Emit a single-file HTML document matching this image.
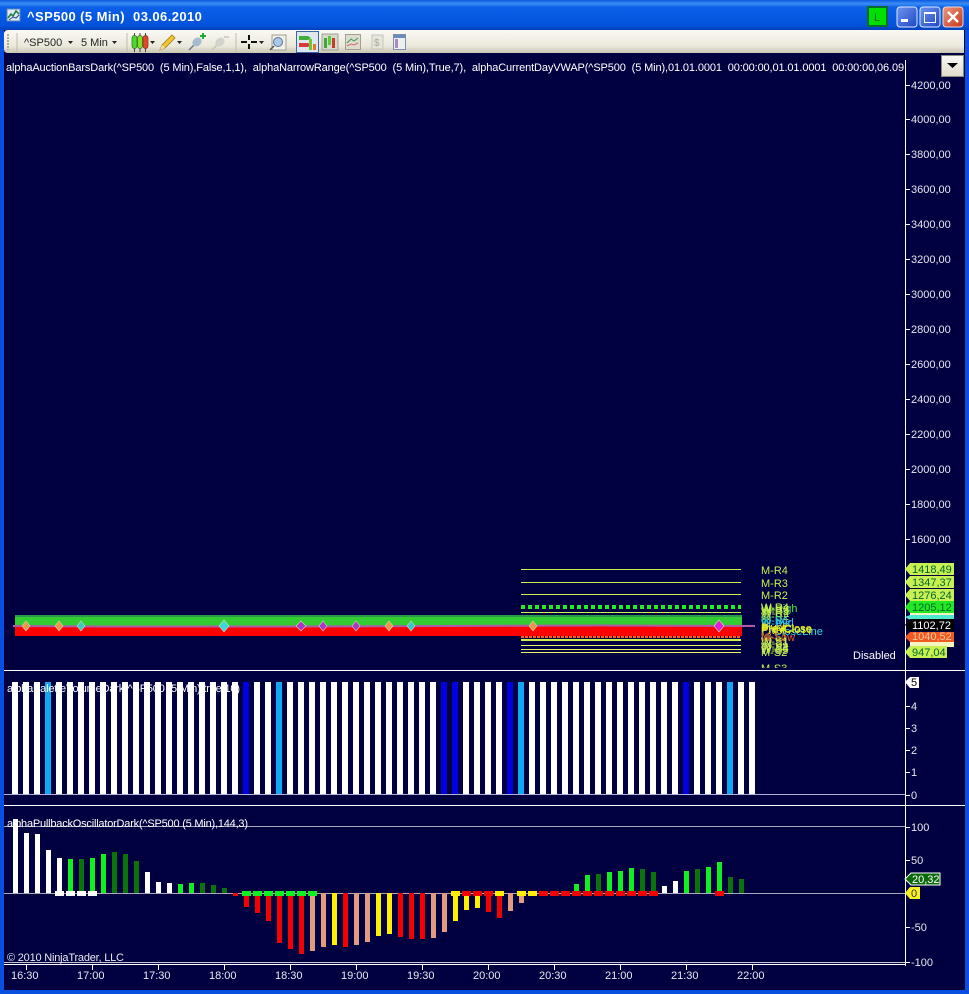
<!DOCTYPE html>
<html><head><meta charset="utf-8"><title>^SP500</title>
<style>
html,body{margin:0;padding:0;background:#000040;width:969px;height:994px;overflow:hidden}
svg{display:block;position:absolute;left:0;top:0}
text{font-family:"Liberation Sans",sans-serif;font-size:11px;white-space:pre}
.w{fill:#fff}.a{fill:#e8e8f0}.l{fill:#c8f050}
</style></head><body>
<svg width="969" height="994" viewBox="0 0 969 994" xmlns="http://www.w3.org/2000/svg">
<defs>
<linearGradient id="tb" x1="0" y1="0" x2="0" y2="1"><stop offset="0" stop-color="#0a5ae0"/><stop offset=".12" stop-color="#3a8cf5"/><stop offset=".25" stop-color="#0a5fe8"/><stop offset=".85" stop-color="#0452dc"/><stop offset="1" stop-color="#0340b8"/></linearGradient>
<linearGradient id="tool" x1="0" y1="0" x2="0" y2="1"><stop offset="0" stop-color="#faf9f3"/><stop offset=".7" stop-color="#ebe9dc"/><stop offset="1" stop-color="#c8c5b2"/></linearGradient>
<linearGradient id="btn" x1="0" y1="0" x2="1" y2="1"><stop offset="0" stop-color="#6f95ee"/><stop offset="1" stop-color="#1c46c4"/></linearGradient>
<linearGradient id="cls" x1="0" y1="0" x2="1" y2="1"><stop offset="0" stop-color="#eb9a80"/><stop offset="1" stop-color="#c4361a"/></linearGradient>
<linearGradient id="drop" x1="0" y1="0" x2="0" y2="1"><stop offset="0" stop-color="#fbfaf5"/><stop offset="1" stop-color="#dedbca"/></linearGradient>
<pattern id="vb" x="12" y="0" width="11" height="10" patternUnits="userSpaceOnUse"><rect width="6" height="10" fill="#fff"/></pattern>
<clipPath id="c2"><rect x="4" y="53" width="901" height="612"/></clipPath>
<clipPath id="c3"><rect x="4" y="53" width="901" height="615"/></clipPath>
</defs>

<!-- frame -->
<rect width="969" height="994" fill="#0452dc"/>
<rect width="969" height="30" fill="url(#tb)"/>
<rect x="4" y="30" width="961" height="960" fill="#000040"/>
<rect x="0" y="30" width="4" height="964" fill="#0a50e0"/>
<rect x="965" y="30" width="4" height="964" fill="#0a50e0"/>
<rect x="0" y="990" width="969" height="4" fill="#0a50e0"/>

<!-- title icon -->
<rect x="7" y="9" width="13" height="12" fill="#dce8f4" stroke="#5c86b4"/>
<path d="M8 18l3-4 2 2 3-5 3 3" stroke="#1e7a3a" stroke-width="1.5" fill="none"/>
<path d="M9 20l4-3 3 1 3-3" stroke="#2a4a8a" fill="none"/>
<text x="27" y="21" style="font-size:13px;font-weight:bold;letter-spacing:.42px" fill="#fff">^SP500 (5 Min)  03.06.2010</text>

<!-- title buttons -->
<rect x="868" y="7" width="19" height="19" fill="#00e000" stroke="#0a6a30" stroke-width="2"/>
<text x="874" y="21" fill="#063" style="font-size:11px">L</text>
<rect x="897" y="7" width="20" height="20" rx="3" fill="url(#btn)" stroke="#dfe8fb"/>
<rect x="901" y="19" width="7" height="3" fill="#fff"/>
<rect x="920" y="7" width="20" height="20" rx="3" fill="url(#btn)" stroke="#dfe8fb"/>
<rect x="924.500" y="12.500" width="11" height="10" fill="none" stroke="#fff"/><rect x="924" y="12" width="12" height="2" fill="#fff"/>
<rect x="943" y="7" width="20" height="20" rx="3" fill="url(#cls)" stroke="#f3d8d0"/>
<path d="M948 12l10 10M958 12l-10 10" stroke="#fff" stroke-width="2.400"/>

<!-- toolbar -->
<path d="M4 34q0-4 4-4H964V53H8q-4 0-4-4z" fill="url(#tool)"/>
<path d="M8 34v16" stroke="#b0ad9c" stroke-width="2" stroke-dasharray="2 1"/>
<path d="M17 33v19M127 33v19M236 33v19" stroke="#c0bdad"/>
<text x="24" y="46" fill="#222">^SP500</text>
<path d="M68 41h5l-2.500 3z" fill="#222"/>
<text x="81" y="46" fill="#222">5 Min</text>
<path d="M112 41h5l-2.500 3z" fill="#222"/>
<!-- candles -->
<path d="M134.500 33v19M140 33v19M145.500 33v19" stroke="#444"/>
<rect x="132" y="35.500" width="5" height="13" rx="2.500" fill="#4fd82a" stroke="#2c6a20" stroke-width=".7"/>
<rect x="137.500" y="35.500" width="5" height="13" rx="2.500" fill="#7fe02a" stroke="#2c6a20" stroke-width=".7"/>
<rect x="143" y="35.500" width="5" height="13" rx="2.500" fill="#e04a2a" stroke="#7a2a1f" stroke-width=".7"/>
<path d="M150 41h5l-2.500 3z" fill="#222"/>
<!-- pencil -->
<path d="M160 50l2-5 10-10 3 3-10 10z" fill="#f2c632" stroke="#a87a18" stroke-width=".8"/><path d="M160 50l2-5 3 3z" fill="#f0e0b0"/>
<path d="M177 41h5l-2.500 3z" fill="#222"/>
<!-- pin add -->
<path d="M189 50l6-6" stroke="#6a7a90" stroke-width="1.500"/><ellipse cx="197" cy="42" rx="5" ry="4" fill="#a8bcd0" transform="rotate(-40 197 42)"/>
<path d="M203 33v6M200 36h6" stroke="#1fa832" stroke-width="2"/>
<!-- pin gray -->
<path d="M212 50l6-6" stroke="#c4c4bc" stroke-width="1.500"/><ellipse cx="220" cy="42" rx="5" ry="4" fill="#d4d4cc" transform="rotate(-40 220 42)"/><path d="M224 37h5" stroke="#d0d0c8" stroke-width="2"/>
<!-- crosshair -->
<path d="M241 42h6M251 42h6M249 35v5M249 44v5" stroke="#111" stroke-width="2"/>
<path d="M259 41h5l-2.500 3z" fill="#222"/>
<!-- zoom -->
<rect x="272" y="35" width="14" height="15" fill="#f0f0e8" stroke="#a0a090"/><circle cx="278" cy="42" r="4.500" fill="#a8c8e8" stroke="#607898"/><path d="M274 46l-4 4" stroke="#555" stroke-width="1.500"/>
<!-- active button -->
<rect x="296.500" y="31.500" width="22" height="21" fill="#dfe6ee" stroke="#3c68a8"/>
<path d="M299 36h9l3 2-3 2h-9z" fill="#3fae3a"/><path d="M299 43h9l3 2-3 2h-9z" fill="#d83a3a"/>
<rect x="309" y="39" width="3" height="11" fill="#6ac832"/><rect x="313" y="44" width="3" height="6" fill="#e0782a"/>
<!-- chart style -->
<rect x="322" y="34" width="16" height="16" fill="#d8d8cc" stroke="#a0a090"/>
<rect x="324" y="38" width="3" height="10" fill="#3fa83a"/><rect x="328" y="36" width="3" height="9" fill="#5ac83a"/><rect x="332" y="38" width="3" height="10" fill="#c83a2a"/>
<!-- line chart -->
<rect x="345.500" y="34.500" width="15" height="15" fill="#dcdcd0" stroke="#a0a090"/>
<path d="M347 43l4-4 3 2 4-3" stroke="#3a9a4a" fill="none"/><path d="M347 46l4-2 3 1 4-2" stroke="#d86a6a" fill="none"/>
<!-- dollar -->
<rect x="372" y="35" width="11" height="14" fill="#e6e6dc" stroke="#c4c4b8"/><text x="374" y="46" style="font-size:10px" fill="#a8a898">$</text>
<!-- panel -->
<rect x="393.500" y="34.500" width="12" height="15" fill="#eef0f0" stroke="#8090a8"/><rect x="394" y="35" width="11" height="3" fill="#6a8ac0"/><rect x="395" y="39" width="3" height="9" fill="#a88ac8"/>

<!-- indicator caption -->
<g clip-path="url(#c2)">
<text x="6" y="71" class="w" textLength="925" lengthAdjust="spacing">alphaAuctionBarsDark(^SP500  (5 Min),False,1,1),  alphaNarrowRange(^SP500  (5 Min),True,7),  alphaCurrentDayVWAP(^SP500  (5 Min),01.01.0001  00:00:00,01.01.0001  00:00:00,06.09.2010</text>
</g>

<!-- dropdown -->
<rect x="941.500" y="55.500" width="22" height="21" fill="url(#drop)" stroke="#8a8a80"/>
<path d="M947 63h11l-5.500 5z" fill="#000"/>

<!-- axes -->
<path d="M905.500 60V966" stroke="#fff"/>
<path d="M4 670.500H965M4 805.500H965" stroke="#fff"/>
<path d="M905 85.500h5M905 119.500h5M905 154.500h5M905 189.500h5M905 224.500h5M905 259.500h5M905 294.500h5M905 329.500h5M905 364.500h5M905 399.500h5M905 434.500h5M905 469.500h5M905 504.500h5M905 539.500h5M905 706.500h5M905 728.500h5M905 750.500h5M905 772.500h5M905 795.500h5M905 827.500h5M905 860.500h5M905 927.500h5M905 962.500h5" stroke="#fff"/>
<g class="a">
<text x="911" y="89">4200,00</text><text x="911" y="123">4000,00</text><text x="911" y="158">3800,00</text><text x="911" y="193">3600,00</text><text x="911" y="228">3400,00</text><text x="911" y="263">3200,00</text><text x="911" y="298">3000,00</text><text x="911" y="333">2800,00</text><text x="911" y="368">2600,00</text><text x="911" y="403">2400,00</text><text x="911" y="438">2200,00</text><text x="911" y="473">2000,00</text><text x="911" y="508">1800,00</text><text x="911" y="543">1600,00</text>
<text x="911" y="710">4</text><text x="911" y="732">3</text><text x="911" y="754">2</text><text x="911" y="776">1</text><text x="911" y="799">0</text>
<text x="911" y="831">100</text><text x="911" y="864">50</text><text x="911" y="931">-50</text><text x="911" y="966">-100</text>
</g>

<!-- price pane levels -->
<g shape-rendering="crispEdges">
<path d="M521 569.500H741M521 582.500H741M521 594.500H741M521 612.500H741" stroke="#c8f050"/>
<rect x="521" y="639" width="220" height="2" fill="#c8f050"/>
<path d="M521 645.500H741M521 649.500H741M521 652.500H741" stroke="#e8f070"/>
<path d="M521 607H741" stroke="#22ee22" stroke-width="4" stroke-dasharray="4 3"/>
<path d="M521 637H741" stroke="#ff5a20" stroke-width="2" stroke-dasharray="3 1"/>
<rect x="15" y="615" width="727" height="2" fill="#2a9a4a"/>
<rect x="15" y="617" width="727" height="9" fill="#33cc33"/>
<rect x="15" y="626" width="727" height="10" fill="#ff0000"/>
</g>
<path d="M13 626L100 626.500 300 626.500 600 625.500 755 626" stroke="#b05aa8" stroke-width="2" fill="none"/>
<!-- diamonds -->
<g stroke="#d8d8b8" stroke-width=".6">
<path d="M26 621l4 5-4 5-4-5z" fill="#e8984a"/><path d="M59 621l4 5-4 5-4-5z" fill="#e8984a"/><path d="M389 621l4 5-4 5-4-5z" fill="#e8984a"/><path d="M533 621l4 5-4 5-4-5z" fill="#e8984a"/>
<path d="M81 621l4 5-4 5-4-5z" fill="#38c8c8"/><path d="M224 620l5 6-5 6-5-6z" fill="#38d8d8"/><path d="M411 621l4 5-4 5-4-5z" fill="#38c8c8"/>
<path d="M301 621l5 5-5 5-5-5z" fill="#a838c8"/><path d="M323 621l4 5-4 5-4-5z" fill="#a838c8"/><path d="M356 621l4 5-4 5-4-5z" fill="#a838c8"/>
<path d="M719 620l5 6-5 6-5-6z" fill="#e020d8"/>
</g>

<!-- level labels -->
<g clip-path="url(#c3)">
<text x="761" y="574" class="l">M-R4</text><text x="761" y="587" class="l">M-R3</text><text x="761" y="599" class="l">M-R2</text>
<text x="761" y="612" fill="#40e840">W-High</text>
<text x="761" y="611" class="l">W-R4</text><text x="761.500" y="613" class="l">W-R3</text><text x="761" y="615" class="l">W-R3</text><text x="761.500" y="617" fill="#b8ec50">W-R2</text><text x="761" y="620" fill="#a8e850">W-R2</text>
<text x="761" y="624" fill="#30c8b0">W-R1</text><text x="761" y="627" fill="#30c8e0">W-Pvt</text><text x="776" y="626" fill="#30b8e8">Mid</text>
<text x="774" y="635" fill="#30d8d8">CloseLine</text>
<text x="761" y="632" fill="#e8f020">PrevClose</text><text x="761.500" y="633" fill="#e8f020">PrevClose</text><text x="761" y="634" fill="#d8e840">Pivot</text><text x="761" y="631" fill="#f0e820">Pivot</text>
<text x="761" y="641" fill="#e85a2a">W-Low</text><text x="761" y="640" fill="#c88a30">M-S1</text>
<text x="761" y="645" class="l">W-S1</text><text x="761.500" y="647" class="l">W-S1</text><text x="761" y="650" class="l">W-S2</text><text x="761.500" y="652" class="l">W-S3</text><text x="761" y="654" class="l">W-S3</text><text x="761" y="656" class="l">M-S2</text>
<text x="761" y="672" class="l">M-S3</text>
</g>
<text x="853" y="659" class="w">Disabled</text>

<!-- price tags -->
<g>
<path d="M905 569l5-6H954V575H910z" fill="#c8f050"/><text x="912" y="573" fill="#063">1418,49</text>
<path d="M905 582l5-6H954V588H910z" fill="#c8f050"/><text x="912" y="586" fill="#063">1347,37</text>
<path d="M905 595l5-6H954V601H910z" fill="#c8f050"/><text x="912" y="599" fill="#063">1276,24</text>
<path d="M905 607l5-6H954V613H910z" fill="#22e822"/><text x="912" y="611" fill="#063">1205,12</text>
<rect x="910" y="613" width="44" height="2" fill="#f4f4c0"/>
<path d="M905 617l5-2H954V620H910z" fill="#50e8d0"/>
<path d="M905 625l5-6H954V631H910z" fill="#000"/><text x="912" y="629" fill="#fff">1102,72</text>
<path d="M905 637l5-5H954V642H910z" fill="#f05a20"/><text x="912" y="640" fill="#f0c8a0">1040,52</text>
<rect x="910" y="642" width="44" height="5" fill="#f4f4c0"/>
<path d="M905 652l5-6H947V658H910z" fill="#c8f050"/><text x="912" y="656" fill="#063">947,04</text>
<path d="M905 682l5-5H919V688H910z" fill="#fff"/><text x="911" y="686" fill="#000">5</text>
<path d="M905 879l6-6H940V885H911z" fill="#0a6a0a" stroke="#fff"/><text x="912" y="883" fill="#fff">20,32</text>
<path d="M905 893l5-6H920V899H910z" fill="#f8f020"/><text x="911" y="897" fill="#333">0</text>
</g>

<!-- volume pane -->
<g shape-rendering="crispEdges">
<rect x="12" y="682" width="743" height="112" fill="url(#vb)"/>
<rect x="45" y="682" width="6" height="112" fill="#10a8f0"/><rect x="276" y="682" width="6" height="112" fill="#10a8f0"/><rect x="518" y="682" width="6" height="112" fill="#10a8f0"/><rect x="727" y="682" width="6" height="112" fill="#10a8f0"/>
<rect x="243" y="682" width="6" height="112" fill="#0000e0"/><rect x="441" y="682" width="6" height="112" fill="#0000e0"/><rect x="452" y="682" width="6" height="112" fill="#0000e0"/><rect x="507" y="682" width="6" height="112" fill="#0000e0"/><rect x="683" y="682" width="6" height="112" fill="#0000e0"/>
<path d="M4 794.500H905" stroke="#b0b0d8"/>
</g>
<text x="7" y="692" class="w" textLength="233" lengthAdjust="spacing">alphaPaletteVolumeDark(^SP500 (5 Min),true,10)</text>

<!-- oscillator pane -->
<g shape-rendering="crispEdges">
<path d="M4 826.500H905M4 893.500H905" stroke="#a8a8c0"/>
<path d="M4 962.500H905" stroke="#c8c8d8"/>
<g stroke-width="5" fill="none">
<path stroke="#fff" d="M15.500 893V819M26.500 893V833M37.500 893V834M48.500 893V850M59.500 893V858M147.500 893V872M158.500 893V882M169.500 893V883M664.500 893V886M675.500 893V881"/>
<path stroke="#10f020" d="M70.500 893V859M92.500 893V858M103.500 893V854M180.500 893V884M191.500 893V883M576.500 893V884M587.500 893V875M609.500 893V872M620.500 893V871M631.500 893V868M686.500 893V871M708.500 893V867M719.500 893V862"/>
<path stroke="#0a730a" d="M81.500 893V859M114.500 893V852M125.500 893V854M136.500 893V861M202.500 893V883M213.500 893V885M224.500 893V888M598.500 893V874M642.500 893V869M653.500 893V872M697.500 893V869M730.500 893V877M741.500 893V879"/>
<path stroke="#f40000" d="M235.500 893V896M246.500 893V907M257.500 893V913M268.500 893V921M279.500 893V943M290.500 893V949M301.500 893V954M345.500 893V947M400.500 893V937M411.500 893V939M422.500 893V939M488.500 893V912M499.500 893V918"/>
<path stroke="#e29a80" d="M312.500 893V951M323.500 893V947M356.500 893V945M367.500 893V942M433.500 893V938M444.500 893V932M510.500 893V911M521.500 893V903"/>
<path stroke="#fff000" d="M334.500 893V945M378.500 893V936M389.500 893V934M455.500 893V921M466.500 893V910M477.500 893V908"/>
<path stroke="#fff" d="M55 893.500h9M66 893.500h9M77 893.500h9M88 893.500h9"/>
<path stroke="#10f020" d="M242 893.500h9M253 893.500h9M264 893.500h9M275 893.500h9M286 893.500h9M297 893.500h9M308 893.500h9"/>
<path stroke="#fff000" d="M451 893.500h9M495 893.500h9M517 893.500h9M528 893.500h9"/>
<path stroke="#f40000" d="M462 893.500h9M473 893.500h9M484 893.500h9M539 893.500h9M550 893.500h9M561 893.500h9M572 893.500h9M583 893.500h9M594 893.500h9M605 893.500h9M616 893.500h9M627 893.500h9M638 893.500h9M649 893.500h9M715 893.500h9"/>
</g>
</g>
<text x="7" y="827" class="w" textLength="241" lengthAdjust="spacing">alphaPullbackOscillatorDark(^SP500 (5 Min),144,3)</text>
<text x="7" y="961" class="a" textLength="117" lengthAdjust="spacing">© 2010 NinjaTrader, LLC</text>

<!-- time axis -->
<path d="M4 964.500H905" stroke="#fff"/>
<path d="M26.500 964v6M92.500 964v6M158.500 964v6M224.500 964v6M290.500 964v6M356.500 964v6M422.500 964v6M488.500 964v6M554.500 964v6M620.500 964v6M686.500 964v6M752.500 964v6" stroke="#fff"/>
<g class="a">
<text x="11" y="979">16:30</text><text x="77" y="979">17:00</text><text x="143" y="979">17:30</text><text x="209" y="979">18:00</text><text x="275" y="979">18:30</text><text x="341" y="979">19:00</text><text x="407" y="979">19:30</text><text x="473" y="979">20:00</text><text x="539" y="979">20:30</text><text x="605" y="979">21:00</text><text x="671" y="979">21:30</text><text x="737" y="979">22:00</text>
</g>
</svg>
</body></html>
